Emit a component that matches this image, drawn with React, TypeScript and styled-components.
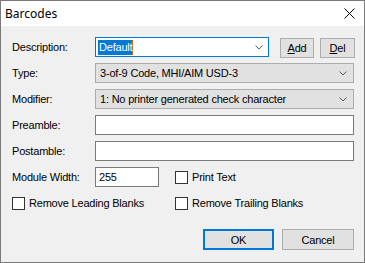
import React from "react";
import styled, { createGlobalStyle } from "styled-components";

const Global = createGlobalStyle`
  html, body { margin: 0; padding: 0; background: #f0f0f0; }
  * { box-sizing: border-box; }
`;

const Window = styled.div`
  width: 365px;
  height: 263px;
  border: 1px solid #7a7a7a;
  background: #f0f0f0;
  display: flex;
  flex-direction: column;
  font-family: "Liberation Sans", Arial, sans-serif;
  font-size: 11px;
  letter-spacing: -0.2px;
  color: #000;
`;

const TitleBar = styled.div`
  height: 25px;
  background: #fff;
  display: flex;
  align-items: center;
  justify-content: space-between;
  padding: 0 9px 0 4px;
  flex: none;
`;

const Title = styled.span`
  font-family: "Noto Sans", "Open Sans", sans-serif;
  font-size: 12px;
  letter-spacing: 0;
  margin-top: -1px;
`;

const Body = styled.div`
  display: flex;
  flex-direction: column;
  gap: 6px;
  padding: 11px 10px 0 11px;
`;

const Row = styled.div`
  display: flex;
  align-items: center;
  height: 20px;
`;

const Label = styled.span`
  width: 83px;
  flex: none;
  white-space: nowrap;
`;

const Combo = styled.div<{ $editable?: boolean; $width?: number }>`
  height: 20px;
  width: ${(p) => (p.$width ? `${p.$width}px` : "auto")};
  flex: ${(p) => (p.$width ? "none" : "1")};
  border: 1px solid ${(p) => (p.$editable ? "#0078d7" : "#adadad")};
  background: ${(p) => (p.$editable ? "#fff" : "#e1e1e1")};
  display: flex;
  align-items: center;
  padding: 0 ${(p) => (p.$editable ? 5 : 6)}px 0 ${(p) => (p.$editable ? 2 : 4)}px;
  white-space: nowrap;
`;

const ComboText = styled.span`
  flex: 1;
  overflow: hidden;
`;

const Selected = styled.span`
  display: inline-block;
  background: #0078d7;
  color: #fff;
  height: 15px;
  line-height: 15px;
  padding: 0 0 0 1px;
  border-right: 1px solid #d86a10;
`;

const TextBox = styled.div<{ $width?: number }>`
  height: 20px;
  width: ${(p) => (p.$width ? `${p.$width}px` : "auto")};
  flex: ${(p) => (p.$width ? "none" : "1")};
  border: 1px solid #7a7a7a;
  background: #fff;
  display: flex;
  align-items: center;
  padding-left: 3px;
`;

const Button = styled.button<{ $width: number; $default?: boolean }>`
  width: ${(p) => p.$width}px;
  height: 21px;
  flex: none;
  margin: 0;
  padding: 0;
  font-family: inherit;
  font-size: 11px;
  letter-spacing: inherit;
  color: #000;
  background: #e1e1e1;
  border: ${(p) => (p.$default ? "2px solid #0078d7" : "1px solid #adadad")};
`;

const SmallButton = styled(Button)`
  height: 20px;
  margin-top: 2px;
`;

const CheckCell = styled.label<{ $width?: number }>`
  display: flex;
  align-items: center;
  gap: 4px;
  width: ${(p) => (p.$width ? `${p.$width}px` : "auto")};
  flex: none;
  white-space: nowrap;
`;

const Box = styled.span`
  width: 13px;
  height: 13px;
  border: 1px solid #333;
  background: #fff;
  flex: none;
`;

const Buttons = styled.div`
  display: flex;
  justify-content: flex-end;
  gap: 8px;
  margin-top: 10px;
`;

const Chevron = () => (
  <svg width="8" height="5" viewBox="0 0 8 5" style={{ flex: "none" }}>
    <polyline points="0.5,0.5 4,4 7.5,0.5" fill="none" stroke="#606060" strokeWidth="1" />
  </svg>
);

const CloseIcon = () => (
  <svg width="11" height="11" viewBox="0 0 11 11">
    <path d="M0.5 0.5 L10.5 10.5 M10.5 0.5 L0.5 10.5" stroke="#000" strokeWidth="1" />
  </svg>
);

const U = styled.span`
  text-decoration: underline;
  text-underline-offset: 1px;
`;

export default function App() {
  return (
    <>
      <Global />
      <Window>
        <TitleBar>
          <Title>Barcodes</Title>
          <CloseIcon />
        </TitleBar>
        <Body>
          <Row>
            <Label>Description:</Label>
            <Combo $editable $width={174}>
              <ComboText>
                <Selected>Default</Selected>
              </ComboText>
              <Chevron />
            </Combo>
            <SmallButton $width={34} style={{ marginLeft: 11 }}>
              <U>A</U>dd
            </SmallButton>
            <SmallButton $width={35} style={{ marginLeft: 6 }}>
              <U>D</U>el
            </SmallButton>
          </Row>
          <Row>
            <Label>Type:</Label>
            <Combo>
              <ComboText>3-of-9 Code, MHI/AIM USD-3</ComboText>
              <Chevron />
            </Combo>
          </Row>
          <Row>
            <Label>Modifier:</Label>
            <Combo>
              <ComboText>1: No printer generated check character</ComboText>
              <Chevron />
            </Combo>
          </Row>
          <Row>
            <Label>Preamble:</Label>
            <TextBox />
          </Row>
          <Row>
            <Label>Postamble:</Label>
            <TextBox />
          </Row>
          <Row>
            <Label>Module Width:</Label>
            <TextBox $width={64}>255</TextBox>
            <CheckCell style={{ marginLeft: 16 }}>
              <Box />
              Print Text
            </CheckCell>
          </Row>
          <Row>
            <CheckCell $width={163}>
              <Box />
              Remove Leading Blanks
            </CheckCell>
            <CheckCell>
              <Box />
              Remove Trailing Blanks
            </CheckCell>
          </Row>
          <Buttons>
            <Button $width={71} $default>OK</Button>
            <Button $width={72}>Cancel</Button>
          </Buttons>
        </Body>
      </Window>
    </>
  );
}
